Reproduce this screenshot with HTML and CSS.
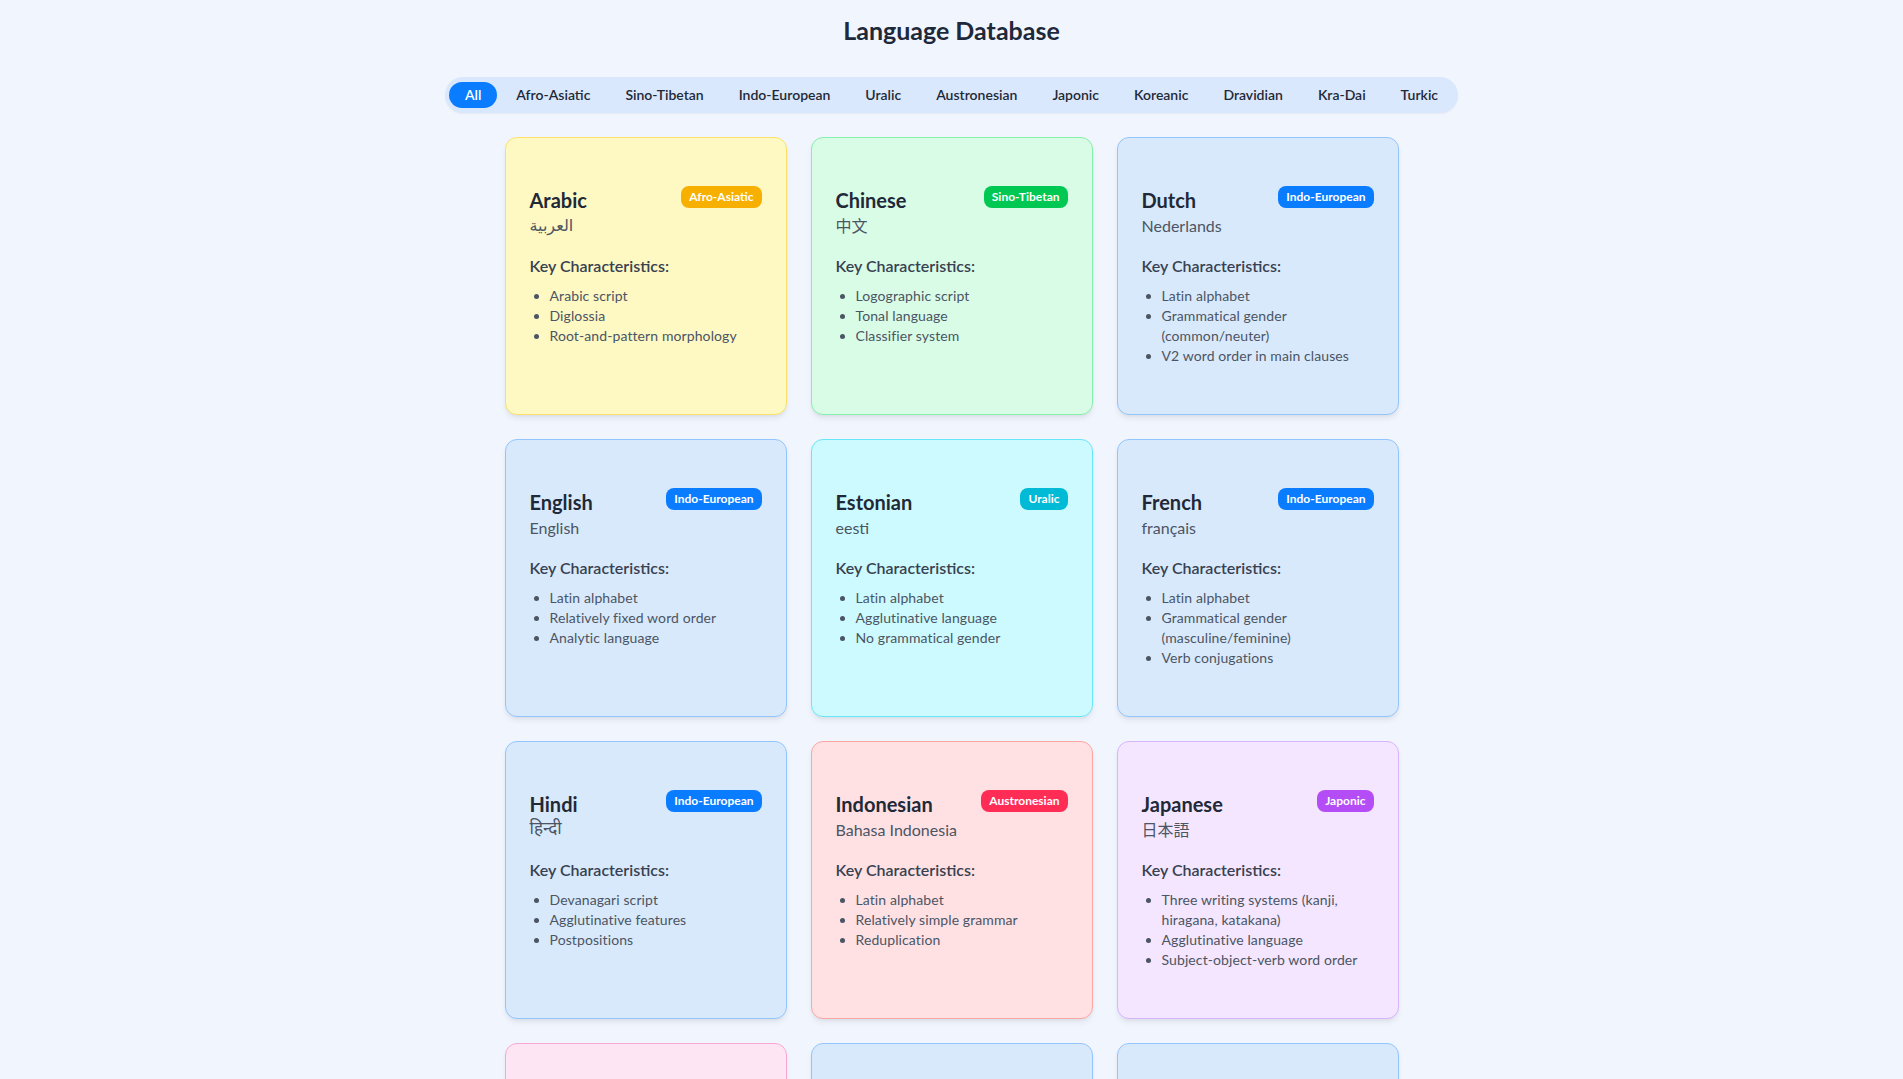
FILE: index.html
```html
<!DOCTYPE html>
<html lang="en">
<head>
<meta charset="utf-8">
<title>Language Database</title>
<link rel="stylesheet" href="styles.css">
</head>
<body>
<main class="page">
  <h1 class="title">Language Database</h1>
  <div class="filter-wrap">
    <nav class="filters">
      <button class="filter active">All</button>
      <button class="filter">Afro-Asiatic</button>
      <button class="filter">Sino-Tibetan</button>
      <button class="filter">Indo-European</button>
      <button class="filter">Uralic</button>
      <button class="filter">Austronesian</button>
      <button class="filter">Japonic</button>
      <button class="filter">Koreanic</button>
      <button class="filter">Dravidian</button>
      <button class="filter">Kra-Dai</button>
      <button class="filter">Turkic</button>
    </nav>
  </div>

  <section class="grid">
    <article class="card yellow">
      <div class="card-head">
        <div>
          <h3 class="name">Arabic</h3>
          <p class="native arabic" lang="ar">العربية</p>
        </div>
        <span class="badge b-yellow">Afro-Asiatic</span>
      </div>
      <h4 class="key">Key Characteristics:</h4>
      <ul class="traits">
        <li>Arabic script</li>
        <li>Diglossia</li>
        <li>Root-and-pattern morphology</li>
      </ul>
    </article>

    <article class="card green">
      <div class="card-head">
        <div>
          <h3 class="name">Chinese</h3>
          <p class="native cjk-sc" lang="zh">中文</p>
        </div>
        <span class="badge b-green">Sino-Tibetan</span>
      </div>
      <h4 class="key">Key Characteristics:</h4>
      <ul class="traits">
        <li>Logographic script</li>
        <li>Tonal language</li>
        <li>Classifier system</li>
      </ul>
    </article>

    <article class="card blue">
      <div class="card-head">
        <div>
          <h3 class="name">Dutch</h3>
          <p class="native">Nederlands</p>
        </div>
        <span class="badge b-blue">Indo-European</span>
      </div>
      <h4 class="key">Key Characteristics:</h4>
      <ul class="traits">
        <li>Latin alphabet</li>
        <li>Grammatical gender (common/neuter)</li>
        <li>V2 word order in main clauses</li>
      </ul>
    </article>

    <article class="card blue">
      <div class="card-head">
        <div>
          <h3 class="name">English</h3>
          <p class="native">English</p>
        </div>
        <span class="badge b-blue">Indo-European</span>
      </div>
      <h4 class="key">Key Characteristics:</h4>
      <ul class="traits">
        <li>Latin alphabet</li>
        <li>Relatively fixed word order</li>
        <li>Analytic language</li>
      </ul>
    </article>

    <article class="card cyan">
      <div class="card-head">
        <div>
          <h3 class="name">Estonian</h3>
          <p class="native">eesti</p>
        </div>
        <span class="badge b-cyan">Uralic</span>
      </div>
      <h4 class="key">Key Characteristics:</h4>
      <ul class="traits">
        <li>Latin alphabet</li>
        <li>Agglutinative language</li>
        <li>No grammatical gender</li>
      </ul>
    </article>

    <article class="card blue">
      <div class="card-head">
        <div>
          <h3 class="name">French</h3>
          <p class="native">français</p>
        </div>
        <span class="badge b-blue">Indo-European</span>
      </div>
      <h4 class="key">Key Characteristics:</h4>
      <ul class="traits">
        <li>Latin alphabet</li>
        <li>Grammatical gender (masculine/feminine)</li>
        <li>Verb conjugations</li>
      </ul>
    </article>

    <article class="card blue">
      <div class="card-head">
        <div>
          <h3 class="name">Hindi</h3>
          <p class="native deva" lang="hi">हिन्दी</p>
        </div>
        <span class="badge b-blue">Indo-European</span>
      </div>
      <h4 class="key">Key Characteristics:</h4>
      <ul class="traits">
        <li>Devanagari script</li>
        <li>Agglutinative features</li>
        <li>Postpositions</li>
      </ul>
    </article>

    <article class="card red">
      <div class="card-head">
        <div>
          <h3 class="name">Indonesian</h3>
          <p class="native">Bahasa Indonesia</p>
        </div>
        <span class="badge b-red">Austronesian</span>
      </div>
      <h4 class="key">Key Characteristics:</h4>
      <ul class="traits">
        <li>Latin alphabet</li>
        <li>Relatively simple grammar</li>
        <li>Reduplication</li>
      </ul>
    </article>

    <article class="card purple">
      <div class="card-head">
        <div>
          <h3 class="name">Japanese</h3>
          <p class="native cjk-jp" lang="ja">日本語</p>
        </div>
        <span class="badge b-purple">Japonic</span>
      </div>
      <h4 class="key">Key Characteristics:</h4>
      <ul class="traits">
        <li>Three writing systems (kanji, hiragana, katakana)</li>
        <li>Agglutinative language</li>
        <li>Subject-object-verb word order</li>
      </ul>
    </article>

    <article class="card pink">
      <div class="card-head">
        <div>
          <h3 class="name">Korean</h3>
          <p class="native cjk-kr" lang="ko">한국어</p>
        </div>
        <span class="badge b-pink">Koreanic</span>
      </div>
      <h4 class="key">Key Characteristics:</h4>
      <ul class="traits">
        <li>Hangul alphabet</li>
        <li>Agglutinative language</li>
        <li>Honorific system</li>
      </ul>
    </article>

    <article class="card blue">
      <div class="card-head">
        <div>
          <h3 class="name">Persian</h3>
          <p class="native arabic" lang="fa">فارسی</p>
        </div>
        <span class="badge b-blue">Indo-European</span>
      </div>
      <h4 class="key">Key Characteristics:</h4>
      <ul class="traits">
        <li>Perso-Arabic script</li>
        <li>No grammatical gender</li>
        <li>Subject-object-verb word order</li>
      </ul>
    </article>

    <article class="card blue">
      <div class="card-head">
        <div>
          <h3 class="name">Portuguese</h3>
          <p class="native">português</p>
        </div>
        <span class="badge b-blue">Indo-European</span>
      </div>
      <h4 class="key">Key Characteristics:</h4>
      <ul class="traits">
        <li>Latin alphabet</li>
        <li>Nasal vowels</li>
        <li>Personal infinitive</li>
      </ul>
    </article>
  </section>
</main>
</body>
</html>
```

FILE: styles.css
```css
* {
  box-sizing: border-box;
}

html, body {
  margin: 0;
  padding: 0;
}

body {
  background: #f1f6fe;
  font-family: Lato, "Noto Sans", "DejaVu Sans", sans-serif;
  color: #1f2937;
}

.page {
  padding: 14px 16px 40px;
}

.title {
  margin: 0 0 31px;
  text-align: center;
  font-size: 25px;
  line-height: 32px;
  font-weight: 700;
  color: #1e293b;
}

.filter-wrap {
  display: flex;
  justify-content: center;
}

.filters {
  display: inline-flex;
  gap: 3px;
  padding: 5px 4px;
  background: #d9e8fc;
  border-radius: 9999px;
  box-shadow: 0 1px 2px rgba(0, 0, 0, 0.05);
}

.filter {
  border: 0;
  background: transparent;
  font-family: inherit;
  font-size: 14px;
  line-height: 18px;
  font-weight: 600;
  color: #1f2937;
  padding: 4px 16px;
  border-radius: 9999px;
  cursor: pointer;
}

.filter.active {
  background: #0a7cff;
  color: #ffffff;
}

.grid {
  width: 894px;
  margin: 24px auto 0;
  display: grid;
  grid-template-columns: repeat(3, 1fr);
  grid-auto-rows: 278px;
  gap: 24px;
}

.card {
  border: 1px solid;
  border-radius: 12px;
  padding: 48px 24px 24px;
  box-shadow: 0 4px 6px -1px rgba(0, 0, 0, 0.08), 0 2px 4px -2px rgba(0, 0, 0, 0.06);
  overflow: hidden;
}

.yellow { background: #fef8c3; border-color: #fde06a; }
.green  { background: #d9fce7; border-color: #86efac; }
.blue   { background: #d9e9fc; border-color: #93c5fd; }
.cyan   { background: #cdfafe; border-color: #67e8f9; }
.red    { background: #ffe1e3; border-color: #fca5a5; }
.purple { background: #f4e6fe; border-color: #d8b4fe; }
.pink   { background: #fde5f3; border-color: #f9a8d4; }

.card-head {
  display: flex;
  justify-content: space-between;
  align-items: flex-start;
}

.name {
  margin: 0;
  font-size: 20px;
  line-height: 28px;
  font-weight: 700;
  color: #1f2937;
}

.native {
  margin: 0;
  font-size: 16px;
  line-height: 24px;
  color: #4b5563;
}

.arabic {
  font-family: "DejaVu Sans", "Noto Sans Arabic", sans-serif;
  font-size: 16px;
}

.deva {
  font-family: "Noto Sans Devanagari", "Noto Sans", sans-serif;
  font-size: 17px;
}

.cjk-sc { font-family: Lato, "Noto Sans CJK SC", sans-serif; }
.cjk-jp { font-family: Lato, "Noto Sans CJK JP", sans-serif; }
.cjk-kr { font-family: Lato, "Noto Sans CJK KR", sans-serif; }

.badge {
  flex: none;
  font-size: 12px;
  line-height: 16px;
  font-weight: 700;
  color: #ffffff;
  padding: 3px 8px;
  border-radius: 8px;
}

.b-yellow { background: #f7b000; }
.b-green  { background: #00c853; }
.b-blue   { background: #0a7cff; }
.b-cyan   { background: #00bad6; }
.b-red    { background: #ff2d55; }
.b-purple { background: #b44df5; }
.b-pink   { background: #ec4899; }

.key {
  margin: 16px 0 0;
  font-size: 16px;
  line-height: 24px;
  font-weight: 600;
  color: #374151;
}

.traits {
  margin: 8px 0 0;
  padding-left: 20px;
  list-style: disc;
  font-size: 14px;
  line-height: 20px;
  letter-spacing: 0.1px;
  color: #4b5563;
}
```
